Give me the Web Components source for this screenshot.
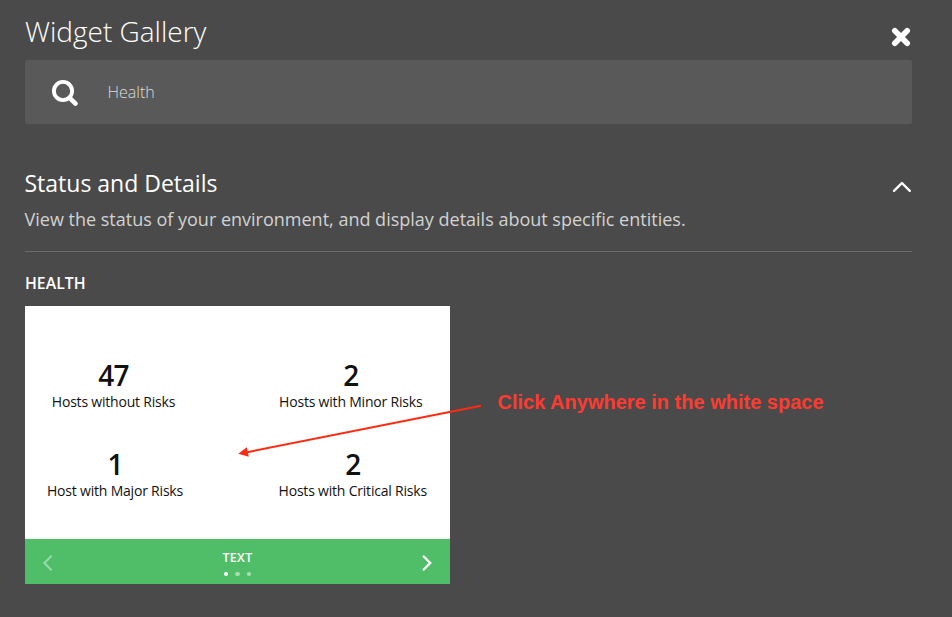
<!DOCTYPE html>
<html lang="en">
<head>
<meta charset="utf-8">
<title>Widget Gallery</title>
<style>
html,body{margin:0;height:617px;overflow:hidden;background:#4a4a4a}
body{font-family:"Open Sans","Noto Sans",sans-serif;color:#fff}
</style>
</head>
<body>
<widget-gallery>
  <gallery-search slot="search">Health</gallery-search>
  <gallery-section>
    <span slot="title">Status and Details</span>
    <span slot="description">View the status of your environment, and display details about specific entities.</span>
    <widget-card label="HEALTH" mode="TEXT">
      <host-metric value="47" style="padding-right:3px">Hosts without Risks</host-metric>
      <host-metric value="2" style="padding-right:6.5px">Hosts with Minor Risks</host-metric>
      <host-metric value="1">Host with Major Risks</host-metric>
      <host-metric value="2" style="padding-right:2.5px">Hosts with Critical Risks</host-metric>
    </widget-card>
  </gallery-section>
  <click-hint slot="overlay">Click Anywhere in the white space</click-hint>
</widget-gallery>
<script>
const define = (name, html, setup) => customElements.define(name, class extends HTMLElement {
  constructor() {
    super();
    this.attachShadow({mode: 'open'}).innerHTML = html;
  }
  connectedCallback() { if (setup) setup(this, this.shadowRoot); }
});

define('widget-gallery', `
<style>
:host{display:block;position:relative;box-sizing:border-box;height:617px;padding:0 40px 0 25px}
header{display:flex;justify-content:space-between;height:60px;box-sizing:border-box;padding-top:11px}
h1{margin:0;font-size:28px;font-weight:300;line-height:40px;white-space:nowrap}
svg{margin:16px 1px 0 0}
</style>
<header><h1>Widget Gallery</h1>
<svg width="20" height="20" viewBox="0 0 20 20"><path d="M3.8 3.8 16.2 16.2M16.2 3.8 3.8 16.2" stroke="#fff" stroke-width="5.6" stroke-linecap="round"/></svg></header>
<slot name="search"></slot><slot></slot><slot name="overlay"></slot>`);

define('gallery-search', `
<style>
:host{display:flex;align-items:center;height:64px;background:#595959;border-radius:2px;font-size:16px;font-weight:300;color:#ddd}
svg{margin:1px 28.5px 0 26px}
</style>
<svg width="28" height="28" viewBox="0 0 28 28" fill="none" stroke="#fff"><circle cx="12" cy="12" r="9.1" stroke-width="3.9"/><path d="M18.6 18.8 24.5 24.6" stroke-width="4.6" stroke-linecap="round"/></svg>
<span><slot></slot></span>`);

define('gallery-section', `
<style>
:host{display:block}
header{display:flex;justify-content:space-between;box-sizing:border-box;height:128px;padding-top:44px;border-bottom:1px solid #6b6b6b}
.t{display:flex;flex-direction:column;gap:6px;white-space:nowrap;margin-left:-.5px}
h2,p{margin:0;font-weight:400;line-height:30px}
h2{font-size:23px}
p{font-size:18px;color:#d2d2d2}
svg{margin:12px 0 0}
</style>
<header><div class="t"><h2><slot name="title"></slot></h2><p><slot name="description"></slot></p></div>
<svg width="20" height="14" viewBox="0 0 20 14"><path d="M2 10.8 9.9 3 17.8 10.8" fill="none" stroke="#fff" stroke-width="2.4" stroke-linecap="round" stroke-linejoin="round"/></svg></header>
<slot></slot>`);

define('widget-card', `
<style>
:host{display:block;width:425px}
h3{margin:0;font-size:15.8px;font-weight:600;padding-top:4px;height:50px;line-height:54px}
.body{display:grid;grid-template-columns:180px 150px;justify-content:space-between;grid-auto-rows:89.3px;box-sizing:border-box;height:233px;padding:53.5px 21px 0 0;background:#fff;color:#111;border-bottom:1px solid #eee}
footer{display:flex;justify-content:space-between;align-items:center;box-sizing:border-box;height:45px;padding:2px 16px 0;background:#50be69}
.m{display:flex;flex-direction:column;align-items:center;font-size:12.5px;font-weight:600;line-height:16px;gap:6px}
.m span{letter-spacing:.3px}
.d{display:flex;gap:7px}
i{width:4.5px;height:4px;border-radius:50%;background:#fff;opacity:.5}
i:first-child{opacity:1}
</style>
<h3></h3>
<div class="body"><slot></slot></div>
<footer>
<svg width="14" height="18" viewBox="0 0 14 18"><path d="M10.6 1.8 3.4 9 10.6 16.2" fill="none" stroke="#fff" stroke-opacity=".42" stroke-width="2"/></svg>
<div class="m"><span></span><div class="d"><i></i><i></i><i></i></div></div>
<svg width="14" height="18" viewBox="0 0 14 18"><path d="M3 1.8 10.2 9 3 16.2" fill="none" stroke="#fff" stroke-width="2.3"/></svg>
</footer>`, (el, root) => {
  root.querySelector('h3').textContent = el.getAttribute('label');
  root.querySelector('.m span').textContent = el.getAttribute('mode');
});

define('host-metric', `
<style>
:host{display:flex;flex-direction:column;align-items:center;text-align:center;white-space:nowrap}
b{font-size:28px;font-weight:600;line-height:30px;letter-spacing:-.8px}
span{font-size:14px;line-height:24px;letter-spacing:-.2px}
</style>
<b></b><span><slot></slot></span>`, (el, root) => {
  root.querySelector('b').textContent = el.getAttribute('value');
});

define('click-hint', `
<style>
:host{position:absolute;left:236px;top:390px;display:flex;color:#ff3b30;font:bold 20px/24px "Liberation Sans",Arial,sans-serif;white-space:nowrap}
svg{margin-right:11.5px}
</style>
<svg width="250" height="72" viewBox="236 390 250 72"><path d="M481 405.8 247 452.2" stroke="#ff2a12" stroke-width="1.9"/><path d="M238.3 453.8 246.8 447.3 248.8 456.7Z" fill="#ff2a12"/></svg><span><slot></slot></span>`);
</script>
</body>
</html>
